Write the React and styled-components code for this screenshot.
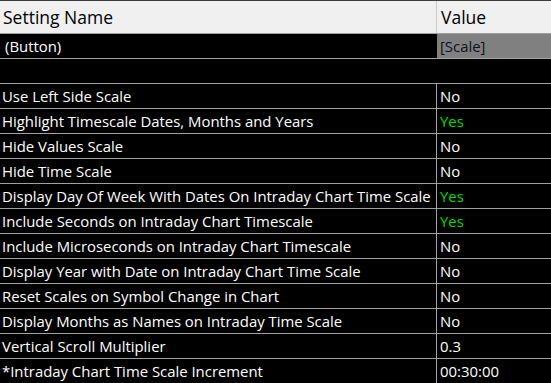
import React from 'react'
import styled, { createGlobalStyle } from 'styled-components'

const GlobalStyle = createGlobalStyle`
  html, body {
    margin: 0;
    padding: 0;
    background: #000;
  }
  body {
    font-family: "Open Sans", "Noto Sans", sans-serif;
  }
`

const settings = [
  { name: 'Use Left Side Scale', value: 'No' },
  { name: 'Highlight Timescale Dates, Months and Years', value: 'Yes' },
  { name: 'Hide Values Scale', value: 'No' },
  { name: 'Hide Time Scale', value: 'No' },
  { name: 'Display Day Of Week With Dates On Intraday Chart Time Scale', value: 'Yes' },
  { name: 'Include Seconds on Intraday Chart Timescale', value: 'Yes' },
  { name: 'Include Microseconds on Intraday Chart Timescale', value: 'No' },
  { name: 'Display Year with Date on Intraday Chart Time Scale', value: 'No' },
  { name: 'Reset Scales on Symbol Change in Chart', value: 'No' },
  { name: 'Display Months as Names on Intraday Time Scale', value: 'No' },
  { name: 'Vertical Scroll Multiplier', value: '0.3' },
  { name: '*Intraday Chart Time Scale Increment', value: '00:30:00' },
]

const Grid = styled.div`
  width: 551px;
  height: 383px;
  overflow: hidden;
  background: #000;
  border-top: 1px solid #3c3c3c;
  box-sizing: border-box;
`

const Header = styled.div`
  display: grid;
  grid-template-columns: 437px 1fr;
  height: 32px;
  background: #f0f0f0;
  border-bottom: 1px solid #a0a0a0;
  color: #000;
  font-size: 17.5px;
`

const HeadCell = styled.div`
  display: flex;
  align-items: center;
  padding-left: ${p => p.$pad || 3}px;
  border-right: ${p => (p.$divider ? '1px solid #c8c8c8' : 'none')};
  white-space: nowrap;
`

const Row = styled.div`
  display: grid;
  grid-template-columns: 437px 1fr;
  height: 24px;
  border-bottom: 1px solid #a0a0a0;
  font-size: 14.9px;
  color: #fff;
`

const Cell = styled.div`
  display: flex;
  align-items: center;
  padding-left: ${p => p.$pad || 2}px;
  white-space: nowrap;
  overflow: hidden;
  background: ${p => p.$bg || 'transparent'};
  color: ${p => p.$color || 'inherit'};
  border-right: ${p => (p.$divider ? '1px solid #a0a0a0' : 'none')};
`

export default function App() {
  return (
    <>
      <GlobalStyle />
      <Grid>
        <Header>
          <HeadCell $divider>Setting Name</HeadCell>
          <HeadCell $pad={4}>Value</HeadCell>
        </Header>
        <Row>
          <Cell $pad={5}>(Button)</Cell>
          <Cell $pad={3} $bg="#808080" $color="#10101a">[Scale]</Cell>
        </Row>
        <Row />
        {settings.map(s => (
          <Row key={s.name}>
            <Cell $divider>{s.name}</Cell>
            <Cell $pad={3} $color={s.value === 'Yes' ? '#00dc00' : undefined}>
              {s.value}
            </Cell>
          </Row>
        ))}
      </Grid>
    </>
  )
}
